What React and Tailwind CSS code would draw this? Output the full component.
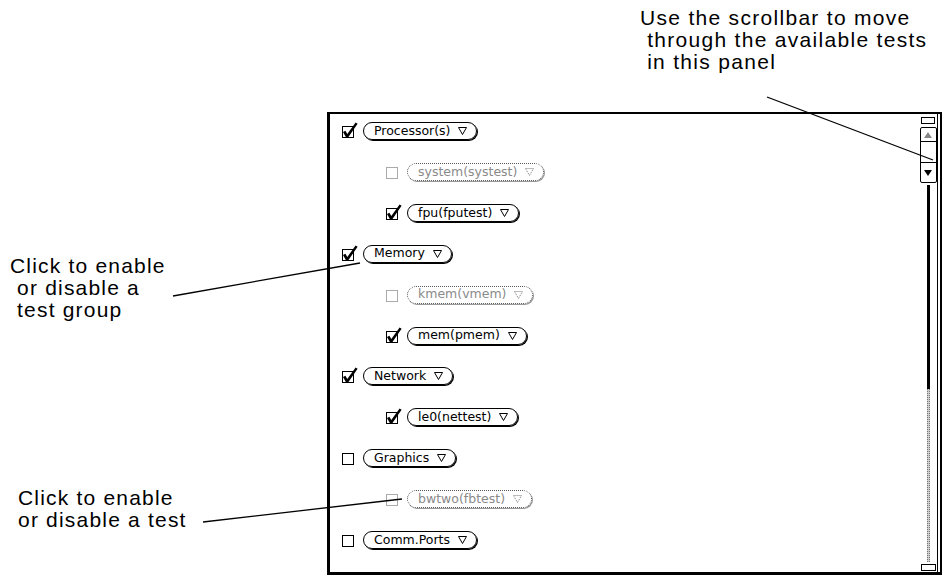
import React from "react";

const rows = [
  { label: "Processor(s)", level: 0, checked: true },
  { label: "system(systest)", level: 1, disabled: true },
  { label: "fpu(fputest)", level: 1, checked: true },
  { label: "Memory", level: 0, checked: true },
  { label: "kmem(vmem)", level: 1, disabled: true },
  { label: "mem(pmem)", level: 1, checked: true },
  { label: "Network", level: 0, checked: true },
  { label: "le0(nettest)", level: 1, checked: true },
  { label: "Graphics", level: 0 },
  { label: "bwtwo(fbtest)", level: 1, disabled: true },
  { label: "Comm.Ports", level: 0 },
];

function CheckBox({ checked, disabled }) {
  return (
    <svg width="16" height="16" viewBox="0 0 16 16" className="shrink-0 overflow-visible">
      <rect
        x="0.5"
        y="3.5"
        width="11"
        height="11"
        fill="white"
        stroke={disabled ? "#555" : "black"}
        strokeDasharray={disabled ? "1 1" : undefined}
      />
      {checked && (
        <polygon points="1,9 3.4,7.8 5.3,11 13.6,-0.5 15.6,0.8 5.8,15 4.4,15" fill="black" />
      )}
    </svg>
  );
}

function Triangle({ disabled }) {
  return (
    <svg width="9" height="8" viewBox="0 0 9 8" className="shrink-0">
      <polygon
        points="0.5,0.5 8.5,0.5 4.5,7.5"
        fill="none"
        stroke={disabled ? "#777" : "black"}
        strokeDasharray={disabled ? "1 1" : undefined}
      />
    </svg>
  );
}

function MenuButton({ label, disabled }) {
  if (disabled) {
    return (
      <div className="flex items-center h-[18px] pl-[10px] pr-[9px] gap-[8px] rounded-full border border-dotted border-[#555] shadow-[1px_1px_0_#999] text-[12.5px] leading-none text-[#8a8a8a]">
        <span>{label}</span>
        <Triangle disabled />
      </div>
    );
  }
  return (
    <div className="flex items-center h-[18px] pl-[10px] pr-[9px] gap-[8px] rounded-full border border-black shadow-[1px_1px_0_#000] text-[12.5px] leading-none text-black">
      <span>{label}</span>
      <Triangle />
    </div>
  );
}

function Row({ row }) {
  return (
    <div className={`h-[41px] ${row.level ? "pl-[56px]" : "pl-[12px]"}`}>
      <div className="flex items-end h-[18px] gap-[5px]">
        <div className="pb-[1px]">
          <CheckBox checked={row.checked} disabled={row.disabled} />
        </div>
        <MenuButton label={row.label} disabled={row.disabled} />
      </div>
    </div>
  );
}

function Scrollbar() {
  return (
    <div className="flex flex-col items-center w-[16px] pt-[3px] mr-[1px]">
      <div className="w-[14px] h-[7px] border border-black" />
      <div className="mt-[3px] w-[17px] h-[56px] border border-black rounded-[2px] flex flex-col bg-white">
        <div className="h-[14px] border-b border-black flex items-center justify-center">
          <svg width="8" height="6" viewBox="0 0 8 6">
            <polygon points="0,6 8,6 4,0" fill="#888" />
          </svg>
        </div>
        <div className="h-[21px] border-b border-black" />
        <div className="flex-1 flex items-center justify-center">
          <svg width="8" height="6" viewBox="0 0 8 6">
            <polygon points="0,0 8,0 4,6" fill="black" />
          </svg>
        </div>
      </div>
      <div className="mt-[2px] w-[3px] h-[204px] bg-black" />
      <div className="w-[3px] h-[173px] border-x border-dotted border-[#777] bg-[#ccc]" />
      <div className="mt-[2px] w-[15px] h-[7px] border border-black" />
    </div>
  );
}

export default function App() {
  return (
    <div
      className="relative w-[944px] h-[576px] overflow-hidden bg-white text-black"
      style={{ fontFamily: '"Liberation Sans", Arial, sans-serif' }}
    >
      <div className="h-[112px] pl-[640px] pt-[7px] text-[21px] leading-[22px] tracking-[1.3px] whitespace-pre">
        <div>Use the scrollbar to move</div>
        <div> through the available tests</div>
        <div> in this panel</div>
      </div>

      <div className="flex">
        <div className="w-[327px] text-[21px] leading-[22px] tracking-[1.2px] whitespace-pre">
          <div className="pl-[10px] mt-[143px]">
            <div>Click to enable</div>
            <div> or disable a</div>
            <div> test group</div>
          </div>
          <div className="pl-[18px] mt-[166px]">
            <div>Click to enable</div>
            <div>or disable a test</div>
          </div>
        </div>

        <div className="w-[615px] h-[463px] border-l-[3px] border-t-2 border-b-[3px] border-r-2 border-black pr-[2px] flex">
          <div
            className="flex-1 flex border-r border-black"
            style={{ fontFamily: '"DejaVu Sans", "Liberation Sans", sans-serif' }}
          >
            <div className="flex-1 flex flex-col pt-[8px]">
              {rows.map((r) => (
                <Row key={r.label} row={r} />
              ))}
            </div>
            <Scrollbar />
          </div>
        </div>
      </div>

      <svg className="absolute inset-0 pointer-events-none" width="944" height="576">
        <line x1="767" y1="97" x2="933" y2="160" stroke="black" strokeWidth="1.3" />
        <line x1="173" y1="296" x2="360" y2="263" stroke="black" strokeWidth="1.3" />
        <line x1="203" y1="522" x2="402" y2="499" stroke="black" strokeWidth="1.3" />
      </svg>
    </div>
  );
}
